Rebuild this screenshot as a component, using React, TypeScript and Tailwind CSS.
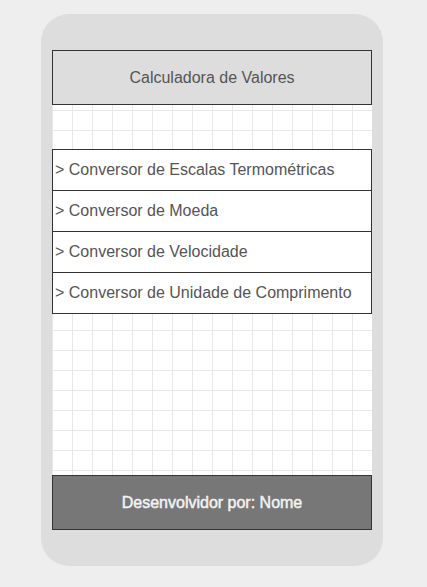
const items = [
  'Conversor de Escalas Termométricas',
  'Conversor de Moeda',
  'Conversor de Velocidade',
  'Conversor de Unidade de Comprimento',
];

export default function App() {
  return (
    <div className="min-h-[587px] bg-[#eeeeee] pt-[14px] font-['Liberation_Sans',Arial,sans-serif]">
      <div className="ml-[41px] w-[342px] h-[552px] rounded-[28px] bg-[#dddddd] px-[11px] py-[36px]">
        <div className="flex h-[480px] w-[320px] flex-col bg-white bg-[linear-gradient(to_right,#e8e8e8_1px,transparent_1px),linear-gradient(to_bottom,#e8e8e8_1px,transparent_1px)] bg-[size:20px_20px]">
          <div className="flex h-[55px] items-center justify-center border border-[#333333] bg-[#dddddd] text-[16px] text-[#555555]">
            Calculadora de Valores
          </div>

          <div className="mt-[44px] flex flex-col">
            {items.map((item, i) => (
              <div
                key={item}
                className={`flex h-[42px] items-center border border-[#333333] bg-white pl-[2px] text-[16px] text-[#555555] ${i > 0 ? '-mt-px' : ''}`}
              >
                &gt; {item}
              </div>
            ))}
          </div>

          <div className="mt-auto flex h-[55px] items-center justify-center border border-[#333333] bg-[#777777] text-[16px] text-[#f2f2f2] [-webkit-text-stroke:0.5px_#f2f2f2]">
            Desenvolvidor por: Nome
          </div>
        </div>
      </div>
    </div>
  );
}
